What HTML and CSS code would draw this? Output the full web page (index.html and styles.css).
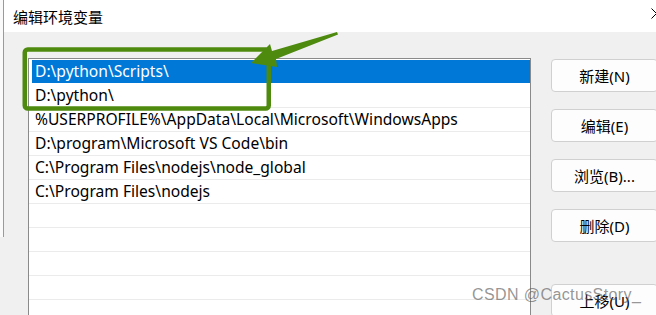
FILE: index.html
```html
<!DOCTYPE html>
<html lang="zh-CN">
<head>
  <meta charset="UTF-8" />
  <title>编辑环境变量</title>
  <link rel="stylesheet" href="styles.css">
</head>
<body>

<div class="screen">
  <div class="edge"></div>

  <div class="dialog">
    <div class="titlebar">
      <span class="title">编辑环境变量</span>
      <svg class="close" viewBox="0 0 11 11">
        <path d="M0.5 0.5 L10.5 10.5 M10.5 0.5 L0.5 10.5" stroke="#000" stroke-width="1" fill="none" />
      </svg>
    </div>

    <div class="content">
      <ul class="paths">
        <li class="selected">D:\python\Scripts\</li>
        <li>D:\python\</li>
        <li>%USERPROFILE%\AppData\Local\Microsoft\WindowsApps</li>
        <li>D:\program\Microsoft VS Code\bin</li>
        <li>C:\Program Files\nodejs\node_global</li>
        <li>C:\Program Files\nodejs</li>
        <li></li>
        <li></li>
        <li></li>
        <li></li>
        <li></li>
        <li></li>
      </ul>

      <div class="actions">
        <button class="btn">新建(N)</button>
        <button class="btn">编辑(E)</button>
        <button class="btn">浏览(B)...</button>
        <button class="btn">删除(D)</button>
        <button class="btn move-up">上移(U)</button>
      </div>
    </div>
  </div>

  <!-- screenshot markup: green frame + arrow -->
  <svg class="markup" viewBox="0 0 656 315">
    <rect x="24.75" y="49.5" width="244" height="59" rx="3" fill="none" stroke="#4d8a0e" stroke-width="4.5" />
    <polygon points="251,63 270,44 272,51 337,32 338,34.5 276,59 277,67" fill="#4d8a0e" />
  </svg>

  <span class="watermark">CSDN @CactusStory_</span>
</div>

</body>
</html>
```

FILE: styles.css
```css
html,
body {
  margin: 0;
  height: 315px;
  overflow: hidden;
}

body {
  background-color: #f0f0f0;
  color: #000;
  font-family: "Noto Sans", "Noto Sans CJK SC", sans-serif;
}

.screen {
  position: relative;
  display: flex;
  align-items: flex-start;
  width: 656px;
  height: 315px;
  overflow: hidden;
}

/* sliver of the window behind the dialog */
.edge {
  flex: none;
  width: 3px;
  height: 237px;
  background: #fafafa;
  border-right: 1px solid #9a9a9a;
}

.dialog {
  flex: 1;
  min-width: 0;
  display: flex;
  flex-direction: column;
}

.titlebar {
  flex: none;
  height: 32px;
  background: #fff;
  display: flex;
  align-items: center;
  justify-content: space-between;
  padding-left: 9px;
}

.title {
  font-size: 15px;
}

.close {
  width: 11px;
  height: 11px;
  margin-right: -6px;
  margin-top: -5px;
}

.content {
  display: flex;
  align-items: flex-start;
  gap: 20px;
  padding: 26px 0 0 24px;
}

/* path list */
.paths {
  flex: none;
  list-style: none;
  margin: 0;
  padding: 1px 0 0 0;
  width: 501px;
  height: 300px;
  background: #fff;
  border: 1px solid #8a8a8a;
}

.paths li {
  height: 23px;
  line-height: 23px;
  padding-left: 6px;
  font-size: 15.6px;
  white-space: nowrap;
  border-bottom: 1px solid #ebebeb;
}

.paths li.selected {
  margin-left: 3px;
  padding-left: 3px;
  background: #0078d7;
  color: #fff;
  border-bottom-color: #fff;
}

/* buttons on the right */
.actions {
  flex: none;
  display: flex;
  flex-direction: column;
  gap: 17px;
  margin-top: 1px;
}

.btn {
  width: 107px;
  height: 33px;
  padding: 0;
  background: #fdfdfd;
  border: 1px solid #d0d0d0;
  border-radius: 4px;
  font-family: inherit;
  font-size: 15px;
  color: #000;
}

.btn.move-up {
  margin-top: 25px;
}

.markup {
  position: absolute;
  top: 0;
  left: 0;
  width: 656px;
  height: 315px;
  pointer-events: none;
}

.watermark {
  position: absolute;
  left: 472px;
  top: 286px;
  font-family: "Liberation Sans", Arial, sans-serif;
  font-size: 16px;
  line-height: 18px;
  letter-spacing: 0.4px;
  color: rgba(90, 90, 90, 0.65);
  white-space: nowrap;
}
```
